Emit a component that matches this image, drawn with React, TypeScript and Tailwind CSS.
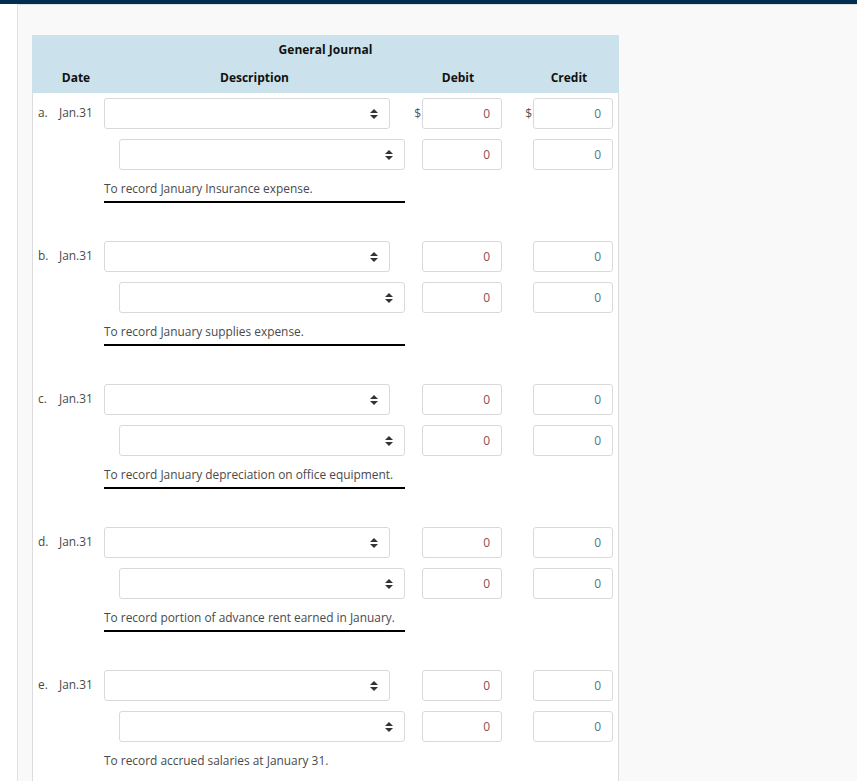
const font = { fontFamily: '"Open Sans", sans-serif' };

const entries = [
  { letter: 'a.', caption: 'To record January Insurance expense.', underline: true },
  { letter: 'b.', caption: 'To record January supplies expense.', underline: true },
  { letter: 'c.', caption: 'To record January depreciation on office equipment.', underline: true },
  { letter: 'd.', caption: 'To record portion of advance rent earned in January.', underline: true },
  { letter: 'e.', caption: 'To record accrued salaries at January 31.', underline: false },
];

function Arrows() {
  return (
    <svg width="8" height="10" viewBox="0 0 8 10" className="shrink-0">
      <path d="M4 0 L8 4 H0 Z M4 10 L8 6 H0 Z" fill="#333" />
    </svg>
  );
}

function SelectBox() {
  return (
    <div className="flex h-[31px] w-[286px] items-center justify-end rounded-[3px] border border-[#d9d9d9] bg-white pr-[11px]">
      <Arrows />
    </div>
  );
}

function Amount({ dollar, red }: { dollar?: boolean; red?: boolean }) {
  return (
    <div className="flex w-[92px] items-center justify-end">
      {dollar && <span className="mr-[1px] text-[12px] text-[#555]">$</span>}
      <div
        className={`flex h-[31px] w-[80px] items-center justify-end rounded-[3px] border border-[#d9d9d9] bg-white pr-[11px] text-[12px] ${red ? 'text-[#8a4f4f]' : 'text-[#4f7780]'}`}
      >
        0
      </div>
    </div>
  );
}

function Entry({ letter, caption, underline, first }: { letter: string; caption: string; underline: boolean; first: boolean }) {
  return (
    <div className="h-[143px] pt-[5px]">
      <div className="flex">
        <div className="flex w-[71px] pl-[5px] pt-[5px] text-[11.9px] leading-[18px] text-[#4a4a4a]">
          <span className="w-[21px]">{letter}</span>
          <span>Jan.31</span>
        </div>
        <SelectBox />
        <div className="ml-[20px]">
          <Amount dollar={first} red />
        </div>
        <div className="ml-[19px]">
          <Amount dollar={first} />
        </div>
      </div>
      <div className="mt-[10px] flex">
        <div className="ml-[86px]">
          <SelectBox />
        </div>
        <div className="ml-[5px]">
          <Amount red />
        </div>
        <div className="ml-[19px]">
          <Amount />
        </div>
      </div>
      <div className="ml-[71px] w-[301px]">
        <div
          className={`h-[33px] pt-[9px] text-[11.9px] leading-[18px] text-[#4a4a4a] ${underline ? 'border-b-2 border-black' : ''}`}
        >
          {caption}
        </div>
      </div>
    </div>
  );
}

export default function App() {
  return (
    <div className="h-[781px] overflow-hidden bg-white" style={font}>
      <div className="h-[4px] bg-[#002d50]" />
      <div className="ml-[17px] h-[777px] border-l border-t border-[#e2e2e2] bg-[#f9f9f9] pl-[14px] pt-[30px]">
        <div className="h-[760px] w-[587px] border-x border-[#dcdcdc] bg-white">
          <div className="-mx-px h-[58px] bg-[#cbe2ec] text-[12px] font-bold text-[#111]">
            <div className="pt-[6px] text-center leading-[18px]">General Journal</div>
            <div className="mt-[10px] flex text-center leading-[18px]">
              <span className="w-[88px]">Date</span>
              <span className="w-[269px]">Description</span>
              <span className="w-[138px]">Debit</span>
              <span className="w-[84px]">Credit</span>
            </div>
          </div>
          {entries.map((entry, i) => (
            <Entry key={entry.letter} first={i === 0} {...entry} />
          ))}
        </div>
      </div>
    </div>
  );
}
